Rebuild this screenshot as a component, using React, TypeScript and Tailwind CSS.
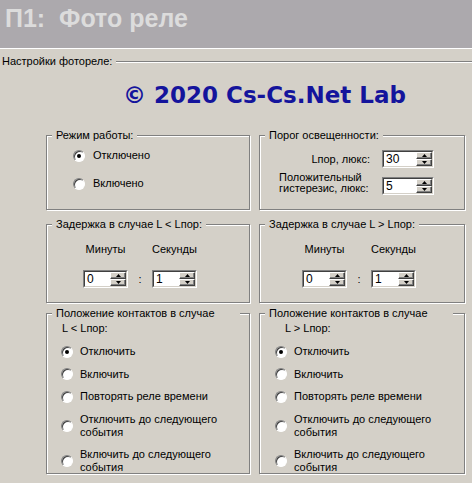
import React from 'react';

function Radio({ checked = false }: { checked?: boolean }) {
  return (
    <span className="flex h-[12px] w-[12px] shrink-0 items-center justify-center rounded-full border border-t-[#808080] border-l-[#808080] border-r-white border-b-white bg-white shadow-[inset_1px_1px_0_#404040]">
      {checked && <span className="h-[4px] w-[4px] rounded-full bg-black" />}
    </span>
  );
}

function Option({ label, checked, gap }: { label: React.ReactNode; checked?: boolean; gap: string }) {
  return (
    <div className={`flex items-center leading-[13px] ${gap}`}>
      <Radio checked={checked} />
      <span>{label}</span>
    </div>
  );
}

function Arrow({ up }: { up?: boolean }) {
  return (
    <svg width="5" height="3" viewBox="0 0 5 3" className="block">
      <path d={up ? 'M2.5 0L5 3H0Z' : 'M0 0H5L2.5 3Z'} fill="#000" />
    </svg>
  );
}

function SpinButton({ up }: { up?: boolean }) {
  return (
    <div className="flex h-[7px] items-center justify-center border border-t-white border-l-white border-r-[#404040] border-b-[#404040] bg-[#d4d0c8] shadow-[inset_-1px_-1px_0_#808080]">
      <Arrow up={up} />
    </div>
  );
}

function Spin({ value, className }: { value: string; className: string }) {
  return (
    <div className={`flex h-[18px] border border-t-[#808080] border-l-[#808080] border-r-white border-b-white ${className}`}>
      <div className="flex flex-1 border border-t-[#404040] border-l-[#404040] border-r-[#d4d0c8] border-b-[#d4d0c8] bg-white">
        <span className="flex-1 pl-[2px] text-[12px] leading-[14px]">{value}</span>
        <div className="flex w-[16px] flex-col">
          <SpinButton up />
          <SpinButton />
        </div>
      </div>
    </div>
  );
}

function Group({
  title,
  className = '',
  legendClass = '',
  children,
}: {
  title: string;
  className?: string;
  legendClass?: string;
  children: React.ReactNode;
}) {
  return (
    <fieldset className={`min-w-0 border border-[#808080] shadow-[inset_1px_1px_0_#fff,1px_1px_0_#fff] ${className}`}>
      <legend className={`ml-[5px] whitespace-nowrap bg-[#d4d0c8] px-[4px] leading-[13px] ${legendClass}`}>{title}</legend>
      {children}
    </fieldset>
  );
}

function Delay({ title, className, pad }: { title: string; className: string; pad: string }) {
  return (
    <Group title={title} className={`h-[85px] ${className}`}>
      <div className={`grid grid-cols-[45px_24px_45px] gap-y-[14px] pt-[12px] ${pad}`}>
        <span className="text-center leading-[13px]">Минуты</span>
        <span />
        <span className="text-center leading-[13px]">Секунды</span>
        <Spin value="0" className="w-[45px]" />
        <span className="text-center leading-[18px]">:</span>
        <Spin value="1" className="w-[45px]" />
      </div>
    </Group>
  );
}

function Contacts({ sign, className, capPad, pad }: { sign: string; className: string; capPad: string; pad: string }) {
  return (
    <Group title="Положение контактов в случае" className={`h-[167px] ${className}`} legendClass="w-[188px]">
      <div className={`pt-[2px] leading-[13px] ${capPad}`}>L {sign} Lпор:</div>
      <div className={`mt-[10px] flex flex-col gap-[9.5px] ${pad}`}>
        <Option checked gap="gap-[7px]" label="Отключить" />
        <Option gap="gap-[7px]" label="Включить" />
        <Option gap="gap-[7px]" label="Повторять реле времени" />
        <Option gap="gap-[7px]" label={<>Отключить до следующего<br />события</>} />
        <Option gap="gap-[7px]" label={<>Включить до следующего<br />события</>} />
      </div>
    </Group>
  );
}

export default function App() {
  return (
    <div className="h-[483px] w-[472px] overflow-hidden bg-[#d4d0c8] font-['Liberation_Sans',Arial,sans-serif] text-[11px] text-black">
      <div className="h-[49px] border-b border-white bg-[#aca9ad] pl-[5px] pt-[4px]">
        <h1 className="whitespace-pre font-['Liberation_Sans',Arial,sans-serif] text-[25px] font-bold leading-[28px] text-[#dcdcdc]">
          П1:  Фото реле
        </h1>
      </div>

      <div className="mt-[6px] flex items-center pl-[2px]">
        <span className="leading-[13px]">Настройки фотореле:</span>
        <div className="ml-[4px] h-[2px] flex-1 border-t border-b border-t-[#808080] border-b-white" />
      </div>

      <p className="mt-[14px] pl-[123px] font-['DejaVu_Sans',sans-serif] text-[23px] font-bold leading-[26px] text-[#14149c]">
        © 2020 Cs-Cs.Net Lab
      </p>

      <div className="mt-[21px] flex gap-[9px] pl-[46px]">
        <Group title="Режим работы:" className="h-[81px] w-[204px]">
          <div className="flex flex-col gap-[15px] pl-[26px] pt-[7px]">
            <Option checked gap="gap-[8px]" label="Отключено" />
            <Option gap="gap-[8px]" label="Включено" />
          </div>
        </Group>
        <Group title="Порог освещенности:" className="h-[81px] w-[206px]">
          <div className="grid grid-cols-[91px_52px] items-center gap-x-[12px] gap-y-[9px] pl-[19px] pt-[8px]">
            <span className="text-right leading-[13px]">Lпор, люкс:</span>
            <Spin value="30" className="w-[52px]" />
            <span className="-mt-[6px] whitespace-nowrap leading-[11px]">
              Положительный
              <br />
              гистерезис, люкс:
            </span>
            <Spin value="5" className="w-[52px]" />
          </div>
        </Group>
      </div>

      <div className="mt-[8px] flex gap-[9px] pl-[46px]">
        <Delay title="Задержка в случае L < Lпор:" className="w-[204px]" pad="pl-[36px]" />
        <Delay title="Задержка в случае L > Lпор:" className="w-[206px]" pad="pl-[42px]" />
      </div>

      <div className="mt-[4px] flex gap-[9px] pl-[46px]">
        <Contacts sign="<" className="w-[204px]" capPad="pl-[15px]" pad="pl-[14px]" />
        <Contacts sign=">" className="w-[206px]" capPad="pl-[25px]" pad="pl-[15px]" />
      </div>
    </div>
  );
}
